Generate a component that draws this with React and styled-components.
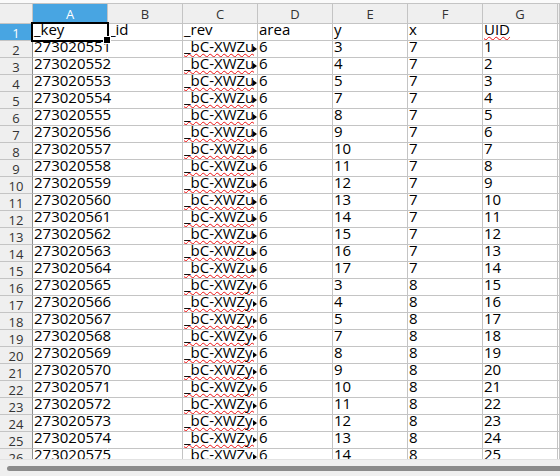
import React from 'react';
import styled, { createGlobalStyle, css } from 'styled-components';

const GlobalStyle = createGlobalStyle`
  html, body {
    margin: 0;
    padding: 0;
    overflow: hidden;
    background: #ffffff;
  }
  * {
    box-sizing: border-box;
  }
`;

const GRID = '#c4c4c4';
const HEAD_BG = '#efefef';
const SELECT_BLUE = '#48a5e2';

const Window = styled.div`
  width: 560px;
  height: 476px;
  display: flex;
  flex-direction: column;
  background: #ffffff;
  font-family: "Open Sans", "Noto Sans", sans-serif;
`;

const TopStrip = styled.div`
  height: 4px;
  flex: none;
  background: #fafafa;
  border-bottom: 1px solid ${GRID};
`;

const Sheet = styled.div`
  height: 455px;
  flex: none;
  overflow: hidden;
  display: grid;
  grid-template-columns: 33px repeat(7, 75px) 1fr;
  grid-template-rows: 20px;
  grid-auto-rows: 17px;
  background: #ffffff;
`;

const Corner = styled.div`
  background: ${HEAD_BG};
  border-right: 1px solid ${GRID};
  border-bottom: 1px solid ${GRID};
`;

const ColHeader = styled.div`
  background: ${(p) => (p.$selected ? SELECT_BLUE : HEAD_BG)};
  color: ${(p) => (p.$selected ? '#ffffff' : '#333333')};
  border-right: 1px solid ${GRID};
  border-bottom: 1px solid ${GRID};
  font-size: 13px;
  line-height: 19px;
  text-align: center;
  padding-top: 1px;
`;

const RowHeader = styled.div`
  background: ${(p) => (p.$selected ? SELECT_BLUE : HEAD_BG)};
  color: ${(p) => (p.$selected ? '#ffffff' : '#333333')};
  border-right: 1px solid #8e8e8e;
  border-bottom: 1px solid ${GRID};
  font-size: 13px;
  line-height: 13px;
  padding-top: 3px;
  text-align: center;
`;

const Cell = styled.div`
  position: relative;
  border-right: 1px solid ${(p) => (p.$spill ? 'transparent' : GRID)};
  border-bottom: 1px solid ${GRID};
  color: #000000;
  font-size: 15px;
  line-height: 11px;
  padding-left: 1px;
  white-space: nowrap;
  overflow: ${(p) => (p.$spill ? 'visible' : 'hidden')};
  z-index: ${(p) => (p.$spill ? 1 : 0)};
  ${(p) =>
    p.$active &&
    css`
      z-index: 2;
      overflow: visible;
    `}
`;

const Clip = styled.span`
  display: block;
  overflow: hidden;
  height: 16px;
  width: 70px;
`;

// spellcheck squiggle under the word
const Spell = styled.span`
  text-decoration-line: underline;
  text-decoration-style: wavy;
  text-decoration-color: #ee1111;
  text-decoration-thickness: 1px;
  text-decoration-skip-ink: none;
  text-underline-offset: 1px;
`;

const Triangle = styled.span`
  position: absolute;
  right: 0;
  top: 5px;
  width: 0;
  height: 0;
  border-top: 3px solid transparent;
  border-bottom: 3px solid transparent;
  border-left: 4px solid #000000;
`;

const Selection = styled.span`
  position: absolute;
  left: -2px;
  top: -2px;
  right: -2px;
  bottom: -2px;
  border: 2px solid #000000;
  pointer-events: none;

  &::after {
    content: '';
    position: absolute;
    right: -4px;
    bottom: -4px;
    width: 6px;
    height: 6px;
    background: #000000;
    border: 1px solid #ffffff;
  }
`;

const BottomBar = styled.div`
  flex: 1;
  background: #efefef;
  border-top: 1px solid #e2e2e2;
  padding: 6px 0 0 7px;
`;

const Thumb = styled.div`
  height: 5px;
  border-radius: 3px 0 0 3px;
  background: #8b8b8b;
`;

const columns = ['A', 'B', 'C', 'D', 'E', 'F', 'G'];

const yValues7 = [3, 4, 5, 7, 8, 9, 10, 11, 12, 13, 14, 15, 16, 17];
const yValues8 = [3, 4, 5, 7, 8, 9, 10, 11, 12, 13, 14];

const buildRows = () => {
  const list = [];
  let uid = 1;
  yValues7.forEach((y) => {
    list.push({ key: String(273020550 + uid), rev: '_bC-XWZu--7Kq', area: 6, y, x: 7, uid });
    uid += 1;
  });
  yValues8.forEach((y) => {
    list.push({ key: String(273020550 + uid), rev: '_bC-XWZy--8Lm', area: 6, y, x: 8, uid });
    uid += 1;
  });
  return list;
};

const rows = buildRows();

const App = () => (
  <>
    <GlobalStyle />
    <Window>
      <TopStrip />
      <Sheet>
        <Corner />
        {columns.map((c) => (
          <ColHeader key={c} $selected={c === 'A'}>
            {c}
          </ColHeader>
        ))}
        <ColHeader />

        <RowHeader $selected>1</RowHeader>
        <Cell $active>
          _key
          <Selection />
        </Cell>
        <Cell>_id</Cell>
        <Cell>_rev</Cell>
        <Cell>area</Cell>
        <Cell>y</Cell>
        <Cell>x</Cell>
        <Cell>
          <Spell>UID</Spell>
        </Cell>
        <Cell />

        {rows.map((r, i) => (
          <React.Fragment key={r.key}>
            <RowHeader>{i + 2}</RowHeader>
            <Cell $spill>{r.key}</Cell>
            <Cell />
            <Cell>
              <Clip>
                <Spell>{r.rev}</Spell>
              </Clip>
              <Triangle />
            </Cell>
            <Cell>{r.area}</Cell>
            <Cell>{r.y}</Cell>
            <Cell>{r.x}</Cell>
            <Cell>{r.uid}</Cell>
            <Cell />
          </React.Fragment>
        ))}
      </Sheet>
      <BottomBar>
        <Thumb />
      </BottomBar>
    </Window>
  </>
);

export default App;
